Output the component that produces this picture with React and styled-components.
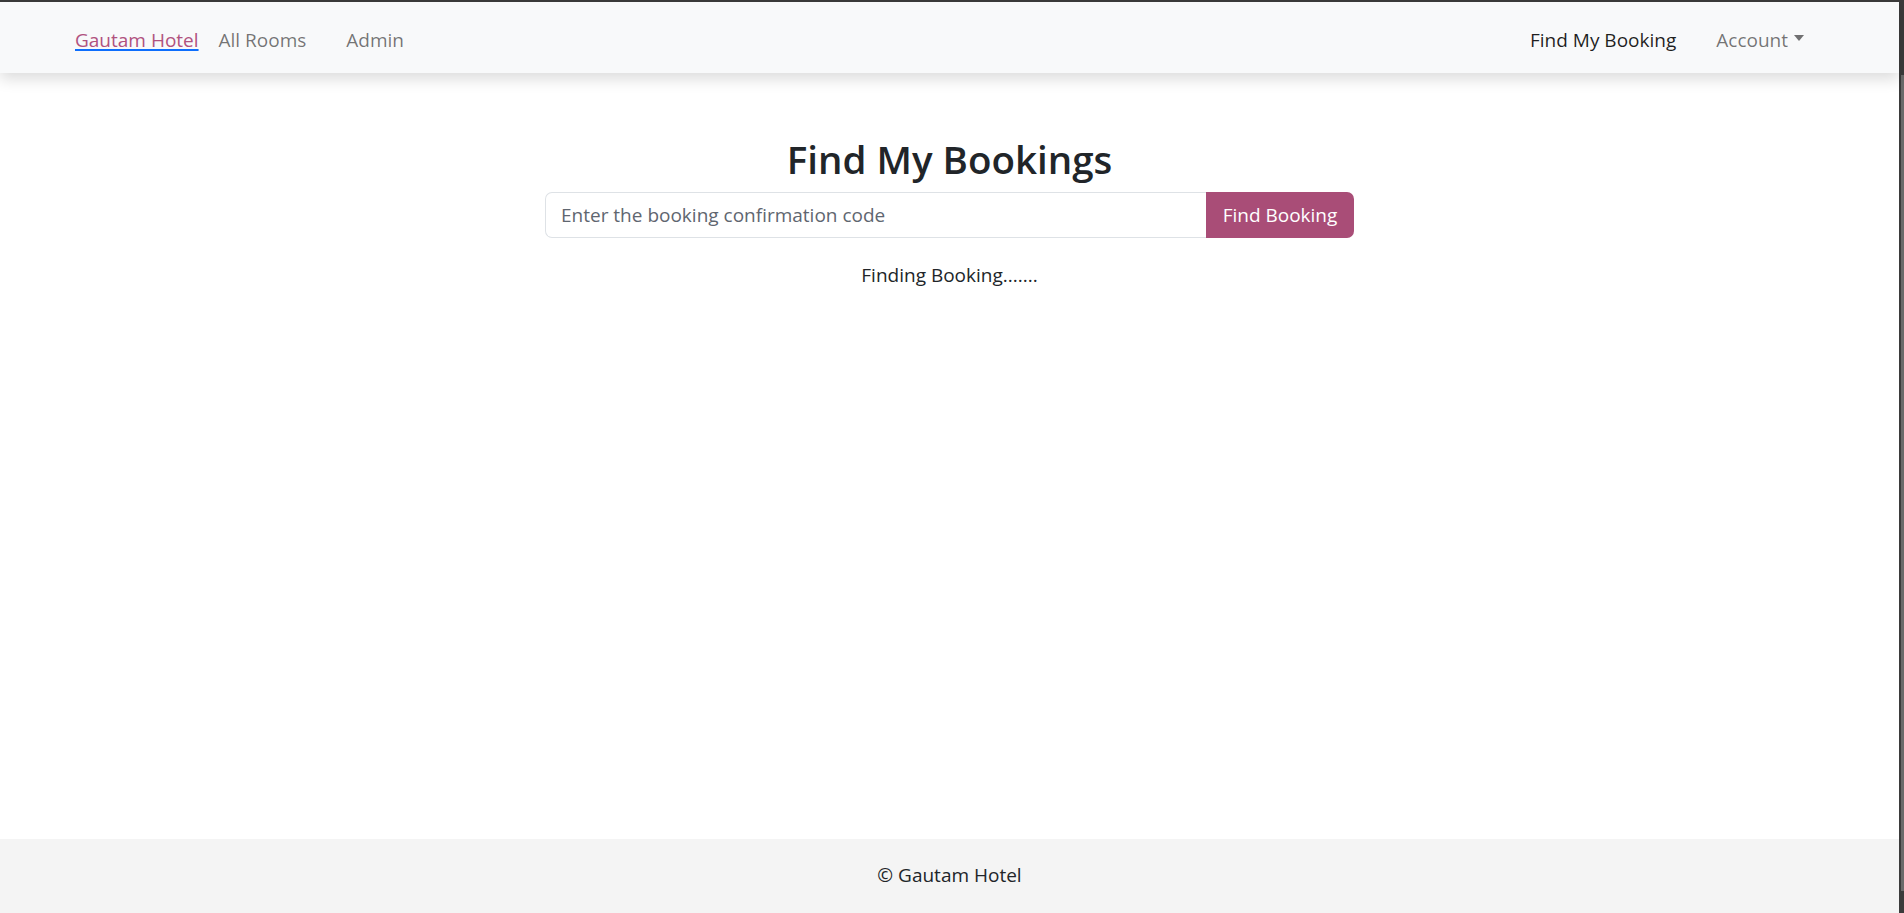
import React from "react";
import styled, { createGlobalStyle } from "styled-components";

const GlobalStyle = createGlobalStyle`
  html, body {
    margin: 0;
    padding: 0;
    height: 100%;
    overflow: hidden;
  }
  body {
    font-family: "Open Sans", "Liberation Sans", sans-serif;
    font-size: 19px;
    color: #212529;
    background: #fff;
  }
  * {
    box-sizing: border-box;
  }
`;

const App = () => {
    return (
        <>
            <GlobalStyle />
            <Window>
                <Page>
                    <Navbar>
                        <NavGroup>
                            <Brand href="#">Gautam Hotel</Brand>
                            <NavLink href="#">All Rooms</NavLink>
                            <NavLink href="#">Admin</NavLink>
                        </NavGroup>
                        <NavGroup>
                            <NavLink href="#" active>Find My Booking</NavLink>
                            <NavLink href="#">
                                Account<Caret />
                            </NavLink>
                        </NavGroup>
                    </Navbar>

                    <Main>
                        <Title>Find My Bookings</Title>
                        <SearchGroup>
                            <CodeInput type="text" placeholder="Enter the booking confirmation code" />
                            <FindButton>Find Booking</FindButton>
                        </SearchGroup>
                        <Status>Finding Booking.......</Status>
                    </Main>

                    <Footer>© Gautam Hotel</Footer>
                </Page>

                <ScrollTrack>
                    <ScrollThumb />
                </ScrollTrack>
            </Window>
        </>
    );
};

export default App;

// browser frame
const Window = styled.div`
    display: flex;
    height: 100vh;
    border-top: 2px solid #3b3b3b;
    background: #3b3b3b;
`;

const Page = styled.div`
    flex: 1;
    display: flex;
    flex-direction: column;
    background: #fff;
`;

const ScrollTrack = styled.div`
    width: 5px;
    display: flex;
    flex-direction: column;
    align-items: flex-end;
    padding-top: 73px;
    padding-bottom: 22px;
    background: #3b3b3b;
`;

const ScrollThumb = styled.div`
    flex: 1;
    width: 3px;
    background: #6a6a6a;
`;

// navbar
const Navbar = styled.nav`
    height: 71px;
    display: flex;
    align-items: center;
    justify-content: space-between;
    padding: 4px 75px 0;
    background: #f8f9fa;
    box-shadow: 0 6px 14px rgba(0, 0, 0, 0.14);
    position: relative;
    z-index: 1;
`;

const NavGroup = styled.div`
    display: flex;
    align-items: center;
`;

const Brand = styled.a`
    color: #b0527f;
    text-decoration: underline;
    text-decoration-color: #0d6efd;
    text-decoration-thickness: 2px;
    text-underline-offset: 2px;
    line-height: 30px;
`;

const NavLink = styled.a`
    display: flex;
    align-items: center;
    padding: 0 20px;
    line-height: 30px;
    text-decoration: none;
    color: ${(p) => (p.active ? "rgba(0, 0, 0, 0.88)" : "rgba(0, 0, 0, 0.55)")};
`;

const Caret = styled.span`
    margin-left: 6px;
    margin-top: -3px;
    border-top: 6px solid currentColor;
    border-left: 5px solid transparent;
    border-right: 5px solid transparent;
`;

// content
const Main = styled.main`
    flex: 1;
    display: flex;
    flex-direction: column;
    align-items: center;
    padding-top: 63px;
`;

const Title = styled.h2`
    margin: 0 0 9px;
    font-size: 38.5px;
    font-weight: 600;
    line-height: 47px;
`;

const SearchGroup = styled.div`
    display: flex;
    width: 809px;
    height: 46px;
`;

const CodeInput = styled.input`
    flex: 1;
    min-width: 0;
    padding: 0 15px;
    font-family: inherit;
    font-size: 19px;
    color: #212529;
    border: 1px solid #dee2e6;
    border-right: none;
    border-radius: 7px 0 0 7px;
    outline: none;

    &::placeholder {
        color: #5f6670;
    }
`;

const FindButton = styled.button`
    width: 148px;
    padding: 0;
    font-family: inherit;
    font-size: 19px;
    color: #fff;
    background: #a94d77;
    border: none;
    border-radius: 0 7px 7px 0;
`;

const Status = styled.p`
    margin: 22px 0 0;
    line-height: 30px;
`;

const Footer = styled.footer`
    height: 74px;
    display: flex;
    align-items: center;
    justify-content: center;
    padding-bottom: 3px;
    background: #f4f4f4;
`;
